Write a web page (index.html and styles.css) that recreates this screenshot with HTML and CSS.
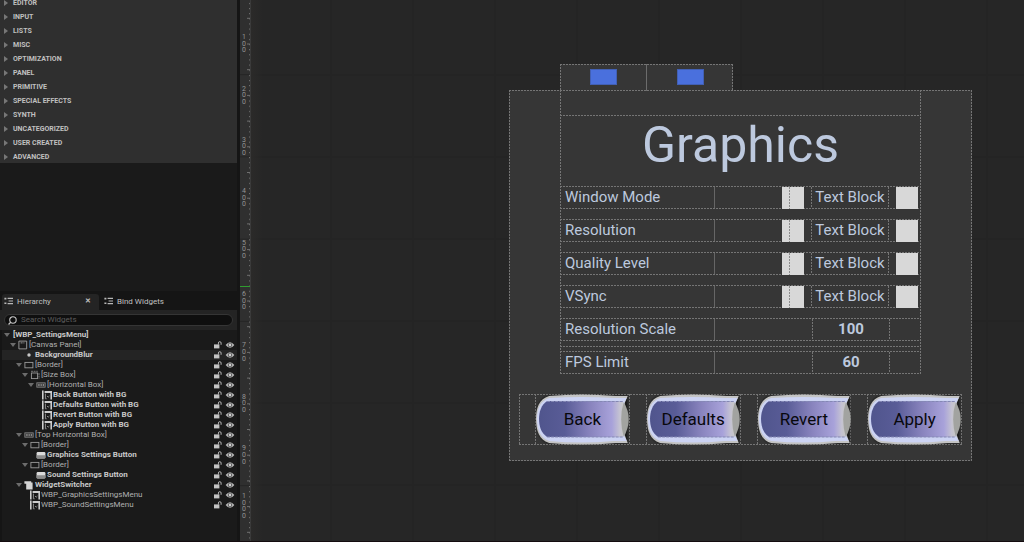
FILE: index.html
```html
<!DOCTYPE html>
<html lang="en">
<head>
  <meta charset="UTF-8">
  <meta name="viewport" content="width=device-width, initial-scale=1.0">
  <title>WBP_SettingsMenu</title>
  <link rel="stylesheet" href="styles.css">
</head>
<body>
  <!-- shared icons -->
  <svg class="defs" width="0" height="0" aria-hidden="true">
    <defs>
      <symbol id="lock" viewBox="0 0 8 8">
        <rect x="0" y="3.400" width="5.400" height="4" fill="#c4c4c4"/>
        <path d="M4.400 3.600V2a1.300 1.300 0 0 1 2.700 0v1.800" fill="none" stroke="#b4b4b4" stroke-width="1"/>
      </symbol>
      <symbol id="eye" viewBox="0 0 10 8">
        <path d="M.6 4Q5-1.600 9.400 4 5 9.600.6 4z" fill="#b4b4b4"/>
        <circle cx="5" cy="4" r="2.100" fill="#3a3a3a"/>
        <circle cx="5" cy="4" r="1.400" fill="#d0d0d0"/>
      </symbol>
      <symbol id="canvas-panel" viewBox="0 0 10 10">
        <path d="M.9 1.100h7.800v7.800H.9zM2.600 2.900h2M5.400 2.900h1" fill="none" stroke="#a4a4a4" stroke-width=".9"/>
      </symbol>
      <symbol id="dot" viewBox="0 0 10 10">
        <circle cx="5" cy="5" r="1.700" fill="#c8c8c8"/>
      </symbol>
      <symbol id="border" viewBox="0 0 10 10">
        <rect x=".9" y="2.400" width="8" height="5.400" fill="none" stroke="#9a9a9a" stroke-width=".9"/>
      </symbol>
      <symbol id="size-box" viewBox="0 0 10 10">
        <rect x="1.400" y="3" width="6.200" height="5.600" fill="none" stroke="#9a9a9a" stroke-width=".9"/>
        <path d="M1 1.300h6.800M9 3v5.800" fill="none" stroke="#808080" stroke-width=".9" stroke-dasharray="2 .6"/>
      </symbol>
      <symbol id="h-box" viewBox="0 0 10 10">
        <rect x=".8" y="2.800" width="8.400" height="4.400" fill="#3c3c3c" stroke="#858585" stroke-width=".8"/>
        <path d="M2.200 4h1.400v2H2.200zM4.600 4h1.200v2H4.600zM6.800 4H8v2H6.800z" fill="#858585"/>
      </symbol>
      <symbol id="user-widget" viewBox="0 0 10 10">
        <path d="M0 .5h1.600v9H0zM2.600 1h7.400v2H2.600zM8.400 3h1.600v6.400H8.400z" fill="#ccc"/>
        <path d="M3.400 3.600v5.200h1.200M5 6l1.200 1.200L7.400 6" fill="none" stroke="#999" stroke-width=".9"/>
      </symbol>
      <symbol id="button" viewBox="0 0 10 10">
        <rect x=".6" y="2" width="8.800" height="6.400" rx="1.200" fill="#dadada"/>
        <path d="M.6 5.200h8.800v2a1.200 1.200 0 0 1-1.200 1.200H1.800A1.200 1.200 0 0 1 .6 7.200z" fill="#8c8c8c"/>
      </symbol>
      <symbol id="switcher" viewBox="0 0 10 10">
        <path d="M.4 1.200h6.800v1.200h1.400v7H2.200V3.800H.4z" fill="#d4d4d4"/>
      </symbol>
      <symbol id="tree-list" viewBox="0 0 10 8">
        <path d="M.4.800h2v1.600h-2zM.4 5.400h2V7h-2zM3.600.8H9v1.200H3.600zM4.600 3.400H9v1H4.600zM3.600 6H9v1.200H3.600z" fill="#b8b8b8"/>
      </symbol>

      <linearGradient id="face">
        <stop offset="0" stop-color="#50558d"/>
        <stop offset=".3" stop-color="#595c97"/>
        <stop offset=".6" stop-color="#8984be"/>
        <stop offset=".85" stop-color="#a8a2da"/>
        <stop offset=".94" stop-color="#c4c2d2"/>
        <stop offset="1" stop-color="#c8c8c2"/>
      </linearGradient>
      <filter id="soft" x="-10%" y="-10%" width="120%" height="120%">
        <feGaussianBlur stdDeviation="1"/>
      </filter>
      <symbol id="plate" viewBox="0 0 94 51" preserveAspectRatio="none">
        <path d="M12 2H92V49H12Q1 42 1 25T12 2z" fill="#1c1c1c" filter="url(#soft)"/>
        <path d="M14 2Q46-1 80 2H92L89 9V41L92 49H80Q46 52 14 49C4 46 1 36 1 25S4 5 14 2z" fill="#c4c4c4"/>
        <path d="M14 4Q46 2 78 4H91L88 10V41L91 47H78Q46 50 14 47C5 44 2 35 2 25S5 7 14 4z" fill="#ccd3f3"/>
        <path d="M12 7H87Q91 25 87 43H12C6 39 4 32 4 25S6 11 12 7z" fill="url(#face)"/>
        <path d="M12 7.500H87M12 43H87" stroke="#8488b4" stroke-width="1" stroke-dasharray="3 1"/>
        <path d="M88 8Q98 25 88 43Q83 25 88 8z" fill="#a2a3a0"/>
      </symbol>
    </defs>
  </svg>

  <aside class="sidebar">
    <ul class="palette">
      <li>EDITOR</li>
      <li>INPUT</li>
      <li>LISTS</li>
      <li>MISC</li>
      <li>OPTIMIZATION</li>
      <li>PANEL</li>
      <li>PRIMITIVE</li>
      <li>SPECIAL EFFECTS</li>
      <li>SYNTH</li>
      <li>UNCATEGORIZED</li>
      <li>USER CREATED</li>
      <li>ADVANCED</li>
    </ul>

    <section class="hierarchy">
      <div class="tabs">
        <button class="tab active"><svg class="tab-icon"><use href="#tree-list"/></svg>Hierarchy<span class="close">✕</span></button>
        <button class="tab"><svg class="tab-icon"><use href="#tree-list"/></svg>Bind Widgets</button>
      </div>
      <div class="search">
        <label class="search-box">
          <svg class="search-icon" viewBox="0 0 10 10"><circle cx="5.500" cy="4.500" r="3.600" fill="none" stroke="#c8c8c8" stroke-width="1.200"/><path d="M3 7L.6 9.400" stroke="#c8c8c8" stroke-width="1.400"/></svg>
          <input type="text" placeholder="Search Widgets" aria-label="Search Widgets">
        </label>
      </div>
      <ul class="tree">
        <li class="row"><i class="arrow"></i><b class="root">[WBP_SettingsMenu]</b></li>
        <li class="row l1"><i class="arrow"></i><svg class="icon"><use href="#canvas-panel"/></svg><span>[Canvas Panel]</span><button class="lock" aria-label="Lock"><svg><use href="#lock"/></svg></button><button class="eye" aria-label="Visibility"><svg><use href="#eye"/></svg></button></li>
        <li class="row l2 hover"><i class="arrow none"></i><svg class="icon"><use href="#dot"/></svg><b>BackgroundBlur</b><button class="lock" aria-label="Lock"><svg><use href="#lock"/></svg></button><button class="eye" aria-label="Visibility"><svg><use href="#eye"/></svg></button></li>
        <li class="row l2"><i class="arrow"></i><svg class="icon"><use href="#border"/></svg><span>[Border]</span><button class="lock" aria-label="Lock"><svg><use href="#lock"/></svg></button><button class="eye" aria-label="Visibility"><svg><use href="#eye"/></svg></button></li>
        <li class="row l3"><i class="arrow"></i><svg class="icon"><use href="#size-box"/></svg><span>[Size Box]</span><button class="lock" aria-label="Lock"><svg><use href="#lock"/></svg></button><button class="eye" aria-label="Visibility"><svg><use href="#eye"/></svg></button></li>
        <li class="row l4"><i class="arrow"></i><svg class="icon"><use href="#h-box"/></svg><span>[Horizontal Box]</span><button class="lock" aria-label="Lock"><svg><use href="#lock"/></svg></button><button class="eye" aria-label="Visibility"><svg><use href="#eye"/></svg></button></li>
        <li class="row l5"><i class="arrow none"></i><svg class="icon"><use href="#user-widget"/></svg><b>Back Button with BG</b><button class="lock" aria-label="Lock"><svg><use href="#lock"/></svg></button><button class="eye" aria-label="Visibility"><svg><use href="#eye"/></svg></button></li>
        <li class="row l5"><i class="arrow none"></i><svg class="icon"><use href="#user-widget"/></svg><b>Defaults Button with BG</b><button class="lock" aria-label="Lock"><svg><use href="#lock"/></svg></button><button class="eye" aria-label="Visibility"><svg><use href="#eye"/></svg></button></li>
        <li class="row l5"><i class="arrow none"></i><svg class="icon"><use href="#user-widget"/></svg><b>Revert Button with BG</b><button class="lock" aria-label="Lock"><svg><use href="#lock"/></svg></button><button class="eye" aria-label="Visibility"><svg><use href="#eye"/></svg></button></li>
        <li class="row l5"><i class="arrow none"></i><svg class="icon"><use href="#user-widget"/></svg><b>Apply Button with BG</b><button class="lock" aria-label="Lock"><svg><use href="#lock"/></svg></button><button class="eye" aria-label="Visibility"><svg><use href="#eye"/></svg></button></li>
        <li class="row l2"><i class="arrow"></i><svg class="icon"><use href="#h-box"/></svg><span>[Top Horizontal Box]</span><button class="lock" aria-label="Lock"><svg><use href="#lock"/></svg></button><button class="eye" aria-label="Visibility"><svg><use href="#eye"/></svg></button></li>
        <li class="row l3"><i class="arrow"></i><svg class="icon"><use href="#border"/></svg><span>[Border]</span><button class="lock" aria-label="Lock"><svg><use href="#lock"/></svg></button><button class="eye" aria-label="Visibility"><svg><use href="#eye"/></svg></button></li>
        <li class="row l4"><i class="arrow none"></i><svg class="icon"><use href="#button"/></svg><b>Graphics Settings Button</b><button class="lock" aria-label="Lock"><svg><use href="#lock"/></svg></button><button class="eye" aria-label="Visibility"><svg><use href="#eye"/></svg></button></li>
        <li class="row l3"><i class="arrow"></i><svg class="icon"><use href="#border"/></svg><span>[Border]</span><button class="lock" aria-label="Lock"><svg><use href="#lock"/></svg></button><button class="eye" aria-label="Visibility"><svg><use href="#eye"/></svg></button></li>
        <li class="row l4"><i class="arrow none"></i><svg class="icon"><use href="#button"/></svg><b>Sound Settings Button</b><button class="lock" aria-label="Lock"><svg><use href="#lock"/></svg></button><button class="eye" aria-label="Visibility"><svg><use href="#eye"/></svg></button></li>
        <li class="row l2"><i class="arrow"></i><svg class="icon"><use href="#switcher"/></svg><b>WidgetSwitcher</b><button class="lock" aria-label="Lock"><svg><use href="#lock"/></svg></button><button class="eye" aria-label="Visibility"><svg><use href="#eye"/></svg></button></li>
        <li class="row l3"><i class="arrow none"></i><svg class="icon"><use href="#user-widget"/></svg><span>WBP_GraphicsSettingsMenu</span><button class="lock" aria-label="Lock"><svg><use href="#lock"/></svg></button><button class="eye" aria-label="Visibility"><svg><use href="#eye"/></svg></button></li>
        <li class="row l3"><i class="arrow none"></i><svg class="icon"><use href="#user-widget"/></svg><span>WBP_SoundSettingsMenu</span><button class="lock" aria-label="Lock"><svg><use href="#lock"/></svg></button><button class="eye" aria-label="Visibility"><svg><use href="#eye"/></svg></button></li>
      </ul>
    </section>
  </aside>

  <svg class="ruler">
    <defs>
      <pattern id="minor" width="11" height="5.140" y="-7.400" patternUnits="userSpaceOnUse"><path d="M9 .5h2" stroke="#6e6e6e"/></pattern>
      <pattern id="major" width="11" height="25.700" y="-7.900" patternUnits="userSpaceOnUse"><path d="M7 .5h4" stroke="#6e6e6e"/></pattern>
      <pattern id="cell" width="11" height="82.200" y="-8" patternUnits="userSpaceOnUse"><path d="M0 .5h11" stroke="#242424"/></pattern>
    </defs>
    <rect width="11" height="100%" fill="url(#cell)"/>
    <rect width="11" height="100%" fill="url(#minor)"/>
    <rect width="11" height="100%" fill="url(#major)"/>
    <g>
      <text x="2" y="39">1</text><text x="2" y="46">0</text><text x="2" y="52">0</text>
      <text x="2" y="91">2</text><text x="2" y="97">0</text><text x="2" y="104">0</text>
      <text x="2" y="142">3</text><text x="2" y="148">0</text><text x="2" y="155">0</text>
      <text x="2" y="193">4</text><text x="2" y="200">0</text><text x="2" y="206">0</text>
      <text x="2" y="245">5</text><text x="2" y="251">0</text><text x="2" y="258">0</text>
      <text x="2" y="296">6</text><text x="2" y="303">0</text><text x="2" y="309">0</text>
      <text x="2" y="347">7</text><text x="2" y="354">0</text><text x="2" y="361">0</text>
      <text x="2" y="399">8</text><text x="2" y="405">0</text><text x="2" y="412">0</text>
      <text x="2" y="450">9</text><text x="2" y="457">0</text><text x="2" y="464">0</text>
      <text x="2" y="498">1</text><text x="2" y="505">0</text><text x="2" y="511">0</text><text x="2" y="518">0</text>
    </g>
    <path d="M0 286.500h12" stroke="#2f9a2f"/>
  </svg>

  <main class="designer">
    <div class="menu">
      <nav class="menu-tabs dashed">
        <button class="menu-tab" aria-label="Graphics"><span></span></button>
        <button class="menu-tab" aria-label="Sound"><span></span></button>
      </nav>
      <div class="dialog dashed">
        <section class="settings dashed">
          <div class="content">
            <h1>Graphics</h1>
            <div class="option dashed"><span class="name">Window Mode</span><button class="step prev" aria-label="Previous"></button><span class="value">Text Block</span><button class="step" aria-label="Next"></button></div>
            <div class="option dashed"><span class="name">Resolution</span><button class="step prev" aria-label="Previous"></button><span class="value">Text Block</span><button class="step" aria-label="Next"></button></div>
            <div class="option dashed"><span class="name">Quality Level</span><button class="step prev" aria-label="Previous"></button><span class="value">Text Block</span><button class="step" aria-label="Next"></button></div>
            <div class="option dashed"><span class="name">VSync</span><button class="step prev" aria-label="Previous"></button><span class="value">Text Block</span><button class="step" aria-label="Next"></button></div>
            <div class="option dashed"><span class="name">Resolution Scale</span><b class="value number">100</b></div>
            <div class="last">
              <div class="option dashed"><span class="name">FPS Limit</span><b class="value number">60</b></div>
            </div>
          </div>
        </section>
        <div class="actions dashed">
          <div class="slot"><button class="action"><svg><use href="#plate"/></svg><span>Back</span></button></div>
          <div class="slot"><button class="action"><svg><use href="#plate"/></svg><span>Defaults</span></button></div>
          <div class="slot"><button class="action"><svg><use href="#plate"/></svg><span>Revert</span></button></div>
          <div class="slot"><button class="action"><svg><use href="#plate"/></svg><span>Apply</span></button></div>
        </div>
      </div>
    </div>
  </main>
</body>
</html>
```
FILE: styles.css
```css
:root {
  --dash: #757575;
  --dash-h: repeating-linear-gradient(90deg, var(--dash) 0 2px, transparent 2px 3px);
  --dash-v: repeating-linear-gradient(180deg, var(--dash) 0 2px, transparent 2px 3px);
}
* {
  box-sizing: border-box;
}
body {
  margin: 0;
  display: flex;
  height: 100vh;
  overflow: hidden;
  background: #151515;
  border-bottom: 1px solid #140c0f;
  color: #c0c0c0;
  font-family: Roboto, "Liberation Sans", sans-serif;
}
ul {
  margin: 0;
  padding: 0;
  list-style: none;
}
button {
  margin: 0;
  padding: 0;
  border: 0;
  background: none;
  color: inherit;
  font: inherit;
  cursor: pointer;
}
.defs {
  position: absolute;
}

/* outline drawn round every widget slot */
.dashed {
  background-image: var(--dash-h), var(--dash-h), var(--dash-v), var(--dash-v);
  background-position: top, bottom, left, right;
  background-size: 100% 1px, 100% 1px, 1px 100%, 1px 100%;
  background-repeat: no-repeat;
}

/* left column */
.sidebar {
  flex: 0 0 240px;
  display: flex;
  flex-direction: column;
  padding-right: 3px;
}
.palette {
  display: flex;
  flex-direction: column;
  justify-content: flex-end;
  height: 163px;
  background: #2f2f2f;
  overflow: hidden;
}
.palette li {
  flex: none;
  display: flex;
  align-items: center;
  gap: 5px;
  height: 14px;
  padding: 1px 0 0 4px;
  font-size: 7px;
  font-weight: 700;
}
.palette li::before {
  content: "";
  border: 3px solid transparent;
  border-left: 4px solid #777;
  border-right: 0;
}
.hierarchy {
  flex: 1;
  display: flex;
  flex-direction: column;
  margin-top: 128px;
  padding-top: 3px;
  background: #151515;
  box-shadow: 0 -128px 0 #1a1a1a;
}
.tabs {
  display: flex;
  height: 16px;
  padding-left: 2px;
}
.tab {
  display: flex;
  align-items: center;
  gap: 3px;
  padding: 0 5px 2px;
  font-size: 8px;
}
.tab.active {
  width: 97px;
  padding-left: 2px;
  background: #242424;
  border-radius: 3px 3px 0 0;
}
.tab-icon {
  width: 10px;
  height: 8px;
}
.close {
  margin-left: auto;
  padding-right: 3px;
  font-size: 7px;
  font-weight: 700;
}
.search {
  padding: 4px;
  background: #242424;
}
.search-box {
  display: flex;
  align-items: center;
  gap: 4px;
  height: 12px;
  padding: 0 3px;
  border: 1px solid #353535;
  border-radius: 6px;
  background: #0f0f0f;
}
.search-icon {
  width: 9px;
  height: 9px;
}
.search-box input {
  flex: 1;
  min-width: 0;
  height: 10px;
  padding: 0;
  border: 0;
  outline: 0;
  background: none;
  color: #c0c0c0;
  font: 8px/10px Roboto, "Liberation Sans", sans-serif;
}
.search-box input::placeholder {
  color: #5c5c5c;
}
.tree {
  flex: 1;
  margin-left: 2px;
  background: #1a1a1a;
}
.row {
  display: flex;
  align-items: center;
  height: 10px;
  padding: 0 2px;
  font-size: 8px;
  line-height: 10px;
  color: #b0b0b0;
  white-space: nowrap;
}
.row b {
  color: #c8c8c8;
}
.row.hover {
  background: #242424;
}
.l1 { padding-left: 8px; }
.l2 { padding-left: 14px; }
.l3 { padding-left: 20px; }
.l4 { padding-left: 26px; }
.l5 { padding-left: 32px; }
.arrow {
  flex: none;
  margin-right: 2px;
  border: 3px solid transparent;
  border-top: 4px solid #6c6c6c;
  border-bottom: 0;
}
.arrow.none {
  visibility: hidden;
}
.root {
  margin-left: 1px;
}
.icon {
  flex: none;
  width: 10px;
  height: 10px;
  margin-right: 1px;
}
.lock {
  margin-left: auto;
}
.lock, .eye {
  display: flex;
}
.lock svg {
  width: 8px;
  height: 8px;
}
.eye svg {
  width: 10px;
  height: 8px;
  margin-left: 3px;
}

.ruler {
  flex: 0 0 11px;
  width: 11px;
  height: 100%;
  background: #2f2f2f;
  border-right: 1px solid #3a3a3a;
}
.ruler text {
  fill: #949494;
  font-size: 7px;
}

/* canvas */
.designer {
  flex: 1;
  display: flex;
  justify-content: flex-end;
  align-items: flex-start;
  padding: 64px 52px 0 0;
  background-color: #262626;
  background-image:
    linear-gradient(90deg, #2b2a29, transparent 12px),
    linear-gradient(90deg, #242424 2px, transparent 2px),
    linear-gradient(#242424 2px, transparent 2px);
  background-size: 100% 100%, 82px 82px, 82px 82px;
  background-position: 0 0, 79px 0, 0 74px;
  background-repeat: no-repeat, repeat, repeat;
}
.menu {
  flex: 0 1 463px;
  color: #bdc9de;
}
.menu-tabs {
  display: flex;
  width: 173px;
  margin-left: 51px;
  background-color: #363636;
}
.menu-tab {
  flex: 1;
  display: flex;
  justify-content: center;
  padding: 5px 0 6px;
}
.menu-tab + .menu-tab {
  border-left: 1px solid #6c6c6c;
}
.menu-tab span {
  width: 27px;
  height: 16px;
  border: 1px solid #4260b4;
  background: #4a70dd;
}
.dialog {
  margin-top: -1px;
  padding: 0 10px 16px;
  background-color: #363636;
}
.settings {
  margin: 0 41px;
  padding-top: 25px;
}
.content {
  display: flex;
  flex-direction: column;
  gap: 10px;
  background: var(--dash-h) top / 100% 1px no-repeat;
}
h1 {
  margin: 0;
  padding-bottom: 1px;
  font-size: 50px;
  font-weight: 400;
  line-height: 60px;
  text-align: center;
}
.option {
  display: flex;
  align-items: center;
  height: 23px;
  padding-right: 3px;
  font-size: 15px;
}
.name {
  width: 155px;
  margin-right: auto;
  padding-left: 5px;
  border-right: 1px solid #666;
  line-height: 21px;
}
.step {
  width: 22px;
  height: 22px;
  background: #d8d8d8;
}
.step.prev {
  background: repeating-linear-gradient(#8c8c8c 0 2px, #d8d8d8 2px 3px) 7px 0 / 1px 100% no-repeat #d8d8d8;
}
.value {
  width: 78px;
  margin: 0 7px;
  line-height: 21px;
  text-align: center;
  background: var(--dash-v) left / 1px 100% no-repeat, var(--dash-v) right / 1px 100% no-repeat;
}
.number {
  margin-right: 28px;
}
.last {
  margin-top: -5px;
  padding-top: 5px;
  background: var(--dash-h) top / 100% 1px no-repeat;
}
.actions {
  display: grid;
  grid-template-columns: repeat(4, 1fr);
  margin-top: 20px;
}
.slot {
  padding-left: 16px;
  background: var(--dash-v) right / 1px 100% no-repeat, var(--dash-v) 16px 0 / 1px 100% no-repeat;
}
.action {
  display: grid;
  place-items: center;
  width: 100%;
  color: #08080c;
  font-size: 17px;
}
.action svg, .action span {
  grid-area: 1 / 1;
}
.action svg {
  width: 100%;
  height: 51px;
}
.action span {
  padding-bottom: 2px;
}
```
